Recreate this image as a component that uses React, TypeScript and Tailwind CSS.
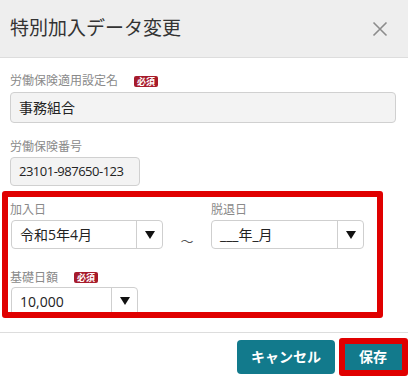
import React from 'react'

const font = { fontFamily: '"Open Sans", "Noto Sans CJK JP", sans-serif' }

function Badge() {
  return (
    <span className="ml-[16px] inline-flex h-[11px] items-center rounded-[2px] bg-[#a61b2b] px-[3px] text-[9px] font-bold leading-none text-white">
      必須
    </span>
  )
}

function Label({ children, required }: { children: React.ReactNode; required?: boolean }) {
  return (
    <div className="flex h-[18px] items-center text-[12px] leading-none text-[#8a8a8a]">
      {children}
      {required && <Badge />}
    </div>
  )
}

function Arrow() {
  return (
    <svg width="10" height="8" viewBox="0 0 10 8">
      <path d="M0 0 H10 L5 8 Z" fill="#111" />
    </svg>
  )
}

function Select({ value, width }: { value: string; width: string }) {
  return (
    <div className={`flex h-[29px] items-stretch rounded-[4px] border border-[#cfcfcf] bg-white ${width}`}>
      <div className="flex flex-1 items-center pl-[8px] text-[14px] text-[#222]">{value}</div>
      <div className="flex w-[26px] items-center justify-center border-l border-[#cfcfcf]">
        <Arrow />
      </div>
    </div>
  )
}

export default function App() {
  return (
    <div className="h-[377px] w-[414px] overflow-hidden bg-white" style={font}>
      <div className="w-[408px]">
        {/* header */}
        <div className="flex h-[58px] items-center justify-between border-b border-[#dddddd] bg-[#eeeeee] pl-[10px] pr-[20px]">
          <span className="text-[19px] leading-none text-[#333]">特別加入データ変更</span>
          <svg width="16" height="16" viewBox="0 0 16 16" className="mt-[1px]">
            <path d="M1.5 1.5 L14.5 14.5 M14.5 1.5 L1.5 14.5" stroke="#8c8c8c" strokeWidth="1.6" />
          </svg>
        </div>

        {/* body */}
        <div className="pb-[16px] pl-[10px] pr-[12px] pt-[14px]">
          <Label required>労働保険適用設定名</Label>
          <div className="mt-[2px] flex h-[31px] items-center rounded-[4px] border border-[#d0d0d0] bg-[#f3f3f3] pl-[8px] text-[14px] text-[#222]">
            事務組合
          </div>

          <div className="mt-[15px]">
            <Label>労働保険番号</Label>
          </div>
          <div className="mt-[1px] flex h-[29px] w-[130px] items-center rounded-[4px] border border-[#d0d0d0] bg-[#f3f3f3] pl-[8px] text-[13px] tracking-[-0.5px] text-[#222]">
            23101-987650-123
          </div>

          <div className="relative mt-[15px]">
            <div className="flex items-start">
              <div>
                <Label>加入日</Label>
                <div className="mt-[1px] pl-[1px]">
                  <Select value="令和5年4月" width="w-[152px]" />
                </div>
              </div>
              <div className="flex w-[48px] justify-center pt-[31px] text-[13px] text-[#555]">～</div>
              <div>
                <Label>脱退日</Label>
                <div className="mt-[1px]">
                  <Select value="___年_月" width="w-[153px]" />
                </div>
              </div>
            </div>
            <div className="mt-[17px]">
              <Label required>基礎日額</Label>
            </div>
            <div className="pl-[1px]">
              <Select value="10,000" width="w-[127px]" />
            </div>

            {/* annotation frame */}
            <div className="pointer-events-none absolute left-[-8px] top-[-10px] h-[127px] w-[381px] rounded-[3px] border-[6px] border-[#e00000]" />
          </div>
        </div>

        {/* footer */}
        <div className="flex justify-end gap-[7px] border-t border-[#dddddd] pr-[4px] pt-[7px]">
          <button className="h-[34px] w-[98px] rounded-[4px] bg-[#127a8c] text-[14px] font-bold text-white">
            キャンセル
          </button>
          <div className="relative">
            <button className="h-[34px] w-[62px] rounded-[4px] bg-[#127a8c] text-[14px] font-bold text-white">
              保存
            </button>
            <div className="pointer-events-none absolute left-[-3px] top-[-2px] h-[38px] w-[69px] rounded-[3px] border-[6px] border-[#e00000]" />
          </div>
        </div>
      </div>
    </div>
  )
}
